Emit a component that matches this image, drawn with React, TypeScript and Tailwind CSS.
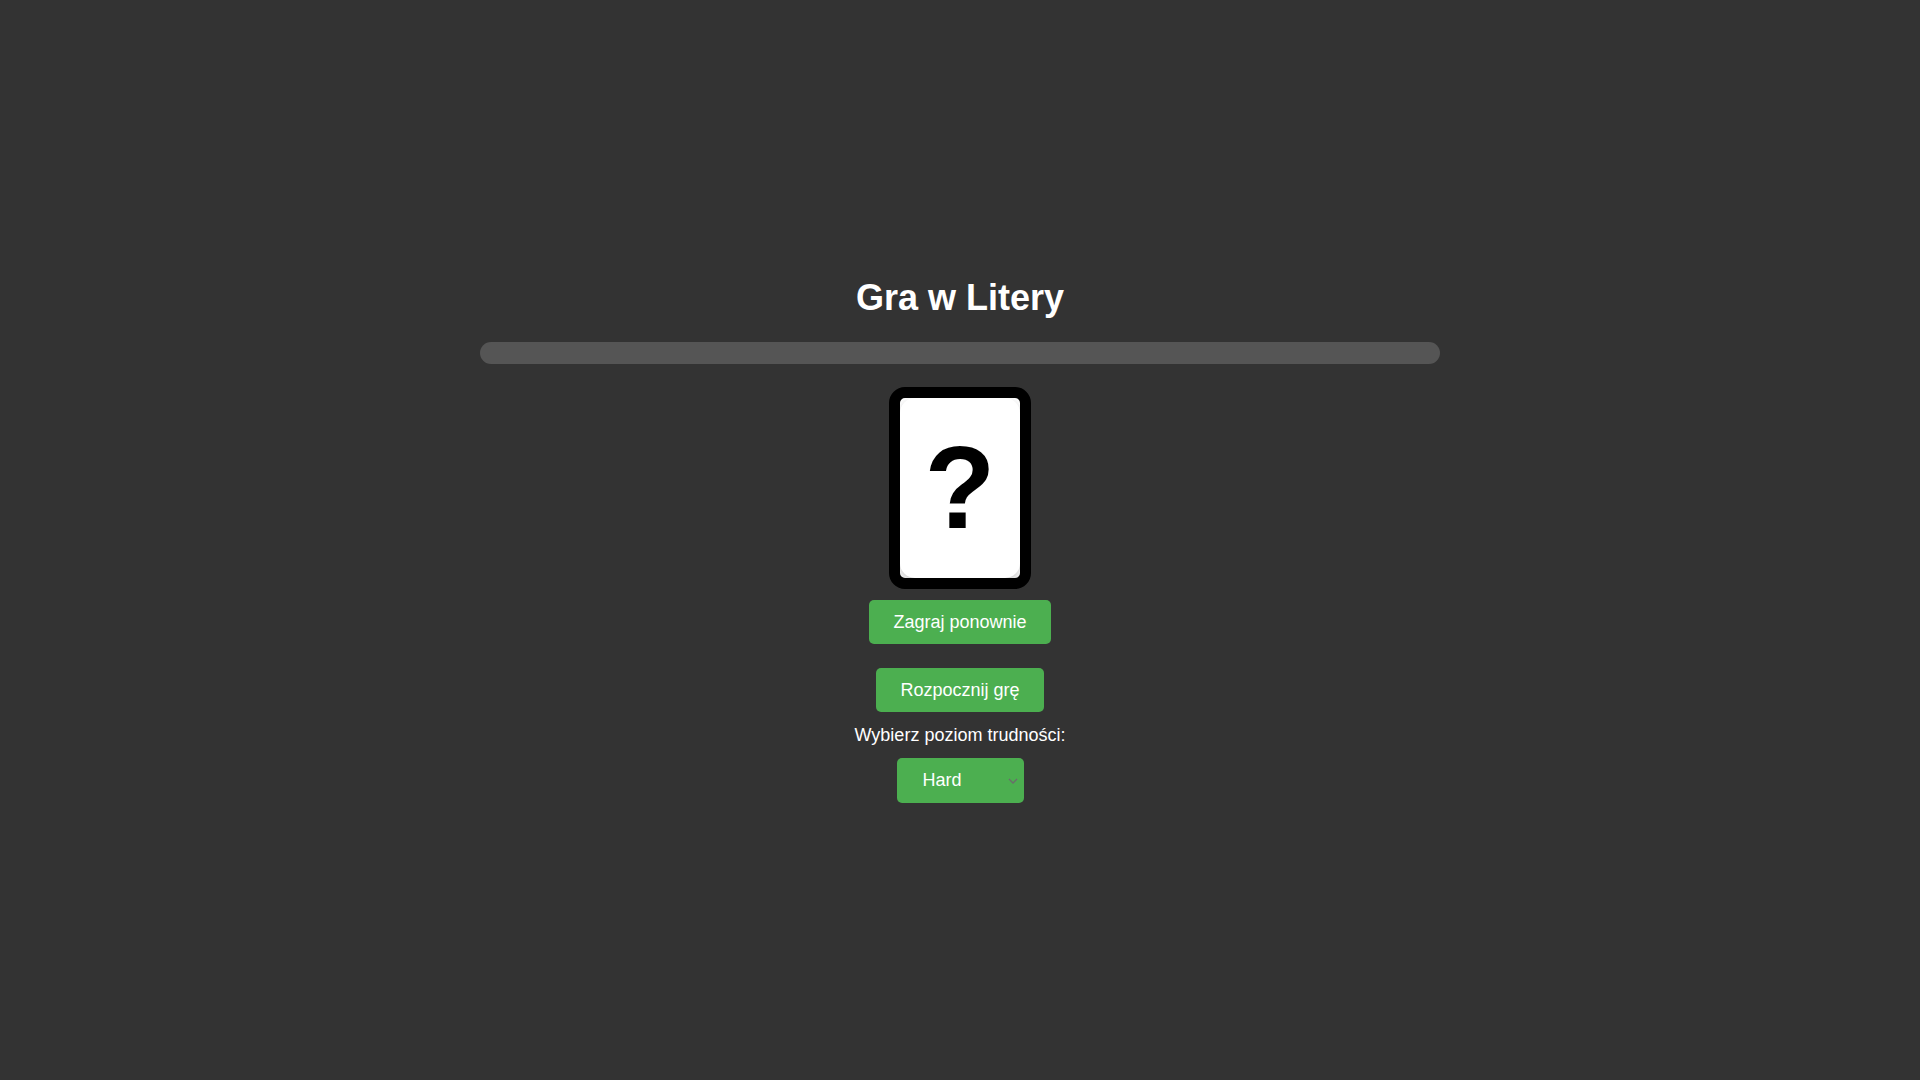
import React, { useState } from "react";

export default function App() {
  const [level, setLevel] = useState("hard");
  return (
    <div
      className="min-h-screen w-full bg-[#333333] text-white flex flex-col items-center justify-center"
      style={{ fontFamily: '"Liberation Sans", Arial, sans-serif' }}
    >
      <h1 className="text-[36px] font-bold leading-[41px] m-0">Gra w Litery</h1>

      <div className="mt-[24px] w-[960px] h-[22px] rounded-full bg-[#555555]" />

      <div className="mt-[23px] w-[142px] h-[202px] border-[11px] border-black rounded-[16px] bg-white overflow-hidden">
        <div className="w-full h-full rounded-[15px] bg-white shadow-[0_4px_10px_rgba(0,0,0,0.22)] flex items-center justify-center">
          <span className="text-[116px] font-bold leading-none text-black">?</span>
        </div>
      </div>

      <button className="mt-[11px] h-[44px] px-[24px] rounded-[5px] bg-[#4CAF50] text-white text-[18px] leading-[20px]">
        Zagraj ponownie
      </button>

      <button className="mt-[24px] h-[44px] px-[24px] rounded-[5px] bg-[#4CAF50] text-white text-[18px] leading-[20px]">
        Rozpocznij grę
      </button>

      <label htmlFor="level" className="mt-[13px] text-[18px] leading-[21px] text-white">
        Wybierz poziom trudności:
      </label>

      <div className="relative mt-[12px] w-[127px] h-[45px]">
        <select
          id="level"
          value={level}
          onChange={(e) => setLevel(e.target.value)}
          className="appearance-none w-full h-full rounded-[5px] bg-[#4CAF50] text-white text-[18px] pl-[26px] pr-[20px] outline-none border-0"
          style={{ fontFamily: '"Liberation Sans", Arial, sans-serif' }}
        >
          <option value="easy">Easy</option>
          <option value="medium">Medium</option>
          <option value="hard">Hard</option>
        </select>
        <svg
          className="absolute right-[6px] top-[20px] pointer-events-none"
          width="10"
          height="6"
          viewBox="0 0 10 6"
          fill="none"
        >
          <path d="M1 1L5 5L9 1" stroke="#6b6b6b" strokeWidth="1.3" />
        </svg>
      </div>
    </div>
  );
}
